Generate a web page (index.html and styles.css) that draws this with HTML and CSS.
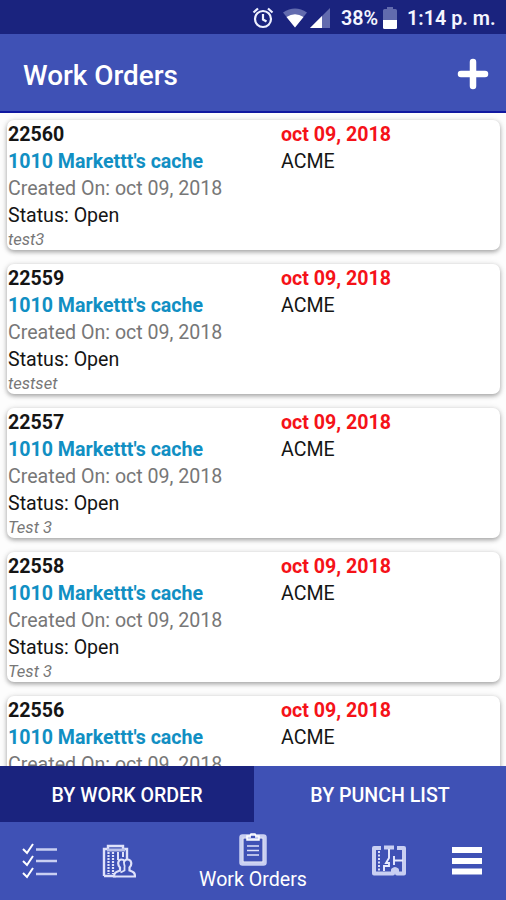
FILE: index.html
```html
<!DOCTYPE html>
<html lang="en">
<head>
<meta charset="utf-8">
<title>Work Orders</title>
<link rel="stylesheet" href="styles.css">
</head>
<body>
<div class="app">
  <div class="status">
    <svg class="alarm" width="22" height="22" viewBox="0 0 22 22" fill="none" stroke="#eef0ff" stroke-width="2.200"><circle cx="11" cy="12" r="8"/><path d="M11 7v5.500l3.500 2M1.500 5.500L6 1.500M20.500 5.500L16 1.500"/></svg>
    <svg class="wifi" width="24" height="20" viewBox="0 0 24 20"><path d="M0 4.500Q12-3.500 24 4.500L12 19.500z" fill="#626bae"/><path d="M3.500 9Q12 3.500 20.500 9L12 19.500z" fill="#fff"/></svg>
    <svg class="signal" width="20" height="20" viewBox="0 0 20 20"><path d="M0 20L20 0V20z" fill="#626bae"/><path d="M0 20L12 8V20z" fill="#fff"/></svg>
    <span class="percent">38%</span>
    <svg class="battery" width="14" height="22" viewBox="0 0 14 22"><path d="M4 0h6v2h2.500Q14 2 14 3.500V13H0V3.500Q0 2 1.500 2H4z" fill="#626bae"/><path d="M0 13h14v7.500q0 1.500-1.500 1.500h-11Q0 22 0 20.500z" fill="#fff"/></svg>
    <span class="clock">1:14 p. m.</span>
  </div>
  <header class="header">
    <h1>Work Orders</h1>
    <svg width="32" height="32" viewBox="0 0 32 32" stroke="#fff" stroke-width="6.500" stroke-linecap="round"><path d="M16 4v24M4 16h24"/></svg>
  </header>
  <main class="list">
    <article class="card">
      <div><b class="number">22560</b><b class="place">1010 Markettt's cache</b><span class="created">Created On: oct 09, 2018</span><span class="state">Status: Open</span><i class="note">test3</i></div>
      <div><b class="due">oct 09, 2018</b><span class="client">ACME</span></div>
    </article>
    <article class="card">
      <div><b class="number">22559</b><b class="place">1010 Markettt's cache</b><span class="created">Created On: oct 09, 2018</span><span class="state">Status: Open</span><i class="note">testset</i></div>
      <div><b class="due">oct 09, 2018</b><span class="client">ACME</span></div>
    </article>
    <article class="card">
      <div><b class="number">22557</b><b class="place">1010 Markettt's cache</b><span class="created">Created On: oct 09, 2018</span><span class="state">Status: Open</span><i class="note">Test 3</i></div>
      <div><b class="due">oct 09, 2018</b><span class="client">ACME</span></div>
    </article>
    <article class="card">
      <div><b class="number">22558</b><b class="place">1010 Markettt's cache</b><span class="created">Created On: oct 09, 2018</span><span class="state">Status: Open</span><i class="note">Test 3</i></div>
      <div><b class="due">oct 09, 2018</b><span class="client">ACME</span></div>
    </article>
    <article class="card">
      <div><b class="number">22556</b><b class="place">1010 Markettt's cache</b><span class="created">Created On: oct 09, 2018</span></div>
      <div><b class="due">oct 09, 2018</b><span class="client">ACME</span></div>
    </article>
  </main>
  <div class="tabs">
    <div class="tab selected"><span>BY WORK ORDER</span></div>
    <div class="tab"><span>BY PUNCH LIST</span></div>
  </div>
  <nav class="nav">
    <svg class="tasks" width="36" height="36" viewBox="0 0 36 36" fill="none" stroke="#fff" stroke-width="2"><path d="M1 6l4 4 6-9M1 18l4 4 6-9M1 30l4 4 6-9"/><path d="M14 6.500h21M14 18h21M14 31h21" stroke="#c9cff2" stroke-width="2.600"/></svg>
    <svg class="building" width="34" height="34" viewBox="0 0 34 34" fill="none" stroke="#dfe2fa"><path d="M2 32V5h4V2h15v3h4v11M2 32h12" stroke-width="2.400"/><path d="M5 6h18" stroke="#b9c0ea" stroke-width="3"/><path d="M6.500 8v22M11 8v22" stroke-width="2.200" stroke-dasharray="2 1"/><path d="M16 8v8M21 8v5" stroke-width="2"/><path d="M12 32.500c0-4 2-4.500 6-6v-3c-3-3-2-8 1.500-8q2 0 3 1.500 1-1.500 3-1.500c4 0 5 5 2 8v3c4 1.500 5.500 2 5.500 6z" fill="#3f51b5" stroke-width="2.200"/><path d="M22.500 17c-2 2 1 4 0 6.500v3l-4 2" stroke-width="1.800"/></svg>
    <div class="current">
      <svg width="28" height="33" viewBox="0 0 28 33" fill="none"><rect x="2" y="3" width="24" height="28" rx="1.500" stroke="#c9cff2" stroke-width="3.500"/><rect x="4" y="5" width="20" height="24" stroke="#fff"/><path d="M8 3h3l1-2h4l1 2h3v4H8z" fill="#c9cff2" stroke="#fff" stroke-width="1.500"/><path d="M12 4h4" stroke="#3f51b5" stroke-width="2"/><path d="M8 13h12M8 17.500h12M8 22h12" stroke="#dfe2fa" stroke-width="1.700"/></svg>
      <span>Work Orders</span>
    </div>
    <svg class="plan" width="36" height="32" viewBox="0 0 36 32" fill="none" stroke="#c9cff2"><path d="M10 3H3v25.500h19V25q2-2 4 0v3.500h7V3h-7M13 2.500h10" stroke-width="4" stroke-linejoin="round"/><path d="M8 6v20" stroke="#eef0ff" stroke-width="1.800" stroke-dasharray="2 1.500"/><path d="M18 4v9l-3 5h3v3h-5v5M23 11v9M23 15.500h9" stroke="#e8ebff" stroke-width="1.900"/></svg>
    <svg class="menu" width="32" height="30" viewBox="0 0 32 30" fill="#fff"><path d="M1 1h30v6H1zM1 12h30v6H1zM1 22.500h30v6H1z"/></svg>
  </nav>
</div>
</body>
</html>
```

FILE: styles.css
```css
* { box-sizing: border-box; }
body { margin: 0; font-family: Roboto, sans-serif; }
.app { width: 506px; height: 900px; display: flex; flex-direction: column; overflow: hidden; background: #fff; }
.status { height: 34px; flex: none; display: flex; align-items: center; padding-left: 252px; padding-top: 2px; background: #1a237e; color: #f4f5ff; font-size: 19.8px; font-weight: 600; white-space: nowrap; }
.status svg { flex: none; }
.wifi { margin-left: 9px; }
.signal { margin-left: 3px; }
.percent { width: 38px; margin-left: 11px; }
.battery { margin-left: 4px; }
.clock { margin-left: 10px; }
.header { height: 79px; flex: none; display: flex; align-items: center; justify-content: space-between; padding: 2px 17px 0 23px; background: #3f51b5; border-bottom: 2px solid #1018a0; color: #fff; }
.header h1 { margin: 3px 0 0; font-size: 27.9px; font-weight: 500; }
.list { flex: 1; min-height: 0; overflow: hidden; padding: 7px 6px 0 7px; display: flex; flex-direction: column; gap: 14px; background: #fdfdfd; }
.card { height: 130px; flex: none; display: grid; grid-template-columns: 273px 1fr; align-items: start; padding: 2px 0 0 1px; border-radius: 7px; background: #fff; box-shadow: 0 2px 4px rgba(0,0,0,.28), 0 1px 7px rgba(0,0,0,.14); font-size: 19.6px; line-height: 26.9px; color: #151515; white-space: nowrap; }
.card b, .card span, .card i { display: block; }
.card b { font-weight: 700; }
.card .place { color: #118fc3; }
.card .created { color: #777; }
.card .note { font-size: 16.6px; line-height: 20px; color: #777; }
.card .due { color: #f51218; }
.tabs { height: 56px; flex: none; display: flex; background: #3f51b5; color: #fff; font-size: 19.6px; font-weight: 500; }
.tab { flex: 1; display: flex; align-items: center; justify-content: center; padding-top: 2px; }
.selected { flex: 0 0 254px; background: #1a237e; }
.nav { height: 78px; flex: none; display: flex; align-items: center; background: #3f51b5; color: #fff; }
.nav svg { flex: none; }
.tasks { margin-left: 22px; }
.building { margin-left: 44px; }
.current { width: 120px; margin-left: 57px; display: flex; flex-direction: column; align-items: center; font-size: 19.6px; line-height: 24px; padding-top: 3px; }
.current svg { margin-bottom: 2px; }
.plan { margin-left: 58px; }
.menu { margin-left: 44px; }
```
